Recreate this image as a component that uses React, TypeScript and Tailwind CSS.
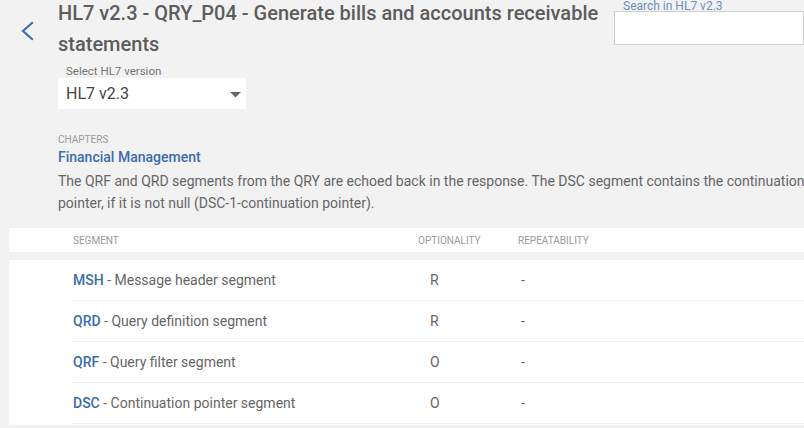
const ROWS = [
  { code: 'MSH', name: 'Message header segment', opt: 'R', rep: '-' },
  { code: 'QRD', name: 'Query definition segment', opt: 'R', rep: '-' },
  { code: 'QRF', name: 'Query filter segment', opt: 'O', rep: '-' },
  { code: 'DSC', name: 'Continuation pointer segment', opt: 'O', rep: '-' },
]

export default function App() {
  return (
    <div className="h-[428px] w-[804px] overflow-hidden bg-[#f2f2f2] font-['Roboto',sans-serif] text-[#616161]">
      {/* Header */}
      <div className="flex">
        <div className="w-[58px] shrink-0 pl-[19px] pt-[21px]">
          <svg width="16" height="20" viewBox="0 0 16 20" fill="none">
            <path d="M13 2 L4 10 L13 18" stroke="#3d6fb3" strokeWidth="2.2" strokeLinecap="square" />
          </svg>
        </div>
        <div className="flex-1">
          <h1 className="mt-[-2px] w-[556px] text-[20px] font-medium leading-[31px] text-[#5c5c5c]">
            HL7 v2.3 - QRY_P04 - Generate bills and accounts receivable statements
          </h1>
          <div className="mt-[4px] w-[188px]">
            <div className="pl-[8px] text-[11.5px] leading-[14px] text-[#777]">Select HL7 version</div>
            <div className="flex h-[31px] items-center justify-between bg-white pl-[8px] pr-[4px]">
              <span className="text-[16px] text-[#444]">HL7 v2.3</span>
              <svg width="11" height="6" viewBox="0 0 11 6" className="mr-[1px] mt-[2px]">
                <path d="M0 0 L11 0 L5.5 5.5 Z" fill="#666" />
              </svg>
            </div>
          </div>
        </div>
        <div className="w-[190px] shrink-0">
          <div className="pt-[1px] pl-[9px] text-[12px] leading-[10px] text-[#6a8fc4]">Search in HL7 v2.3</div>
          <div className="h-[34px] border border-[#cfcfcf] bg-white"></div>
        </div>
      </div>

      {/* Chapter */}
      <div className="mt-[24px] pl-[58px]">
        <div className="text-[10px] uppercase leading-[14px] text-[#9a9a9a]">Chapters</div>
        <div className="text-[14px] font-medium leading-[20px] text-[#3d6cab]">Financial Management</div>
        <p className="mt-[3px] w-[760px] text-[14px] leading-[22px] text-[#666]">
          The QRF and QRD segments from the QRY are echoed back in the response. The DSC segment contains the continuation pointer, if it is not null (DSC-1-continuation pointer).
        </p>
      </div>

      {/* Table */}
      <div className="ml-[9px] mt-[14px]">
        <div className="flex h-[24px] items-center bg-white text-[10px] uppercase text-[#9a9a9a]">
          <div className="w-[409px] pl-[64px]">Segment</div>
          <div className="w-[100px]">Optionality</div>
          <div>Repeatability</div>
        </div>
        <div className="mt-[8px] bg-white pb-[1px]">
          {ROWS.map((r) => (
            <div key={r.code} className="ml-[64px] flex h-[41px] items-center border-b border-[#eeeeee] text-[14px]">
              <div className="w-[357px]">
                <span className="font-medium text-[#3d6cab]">{r.code}</span>
                <span className="text-[#666]"> - {r.name}</span>
              </div>
              <div className="w-[91px] text-[#666]">{r.opt}</div>
              <div className="text-[#666]">{r.rep}</div>
            </div>
          ))}
        </div>
      </div>
    </div>
  )
}
